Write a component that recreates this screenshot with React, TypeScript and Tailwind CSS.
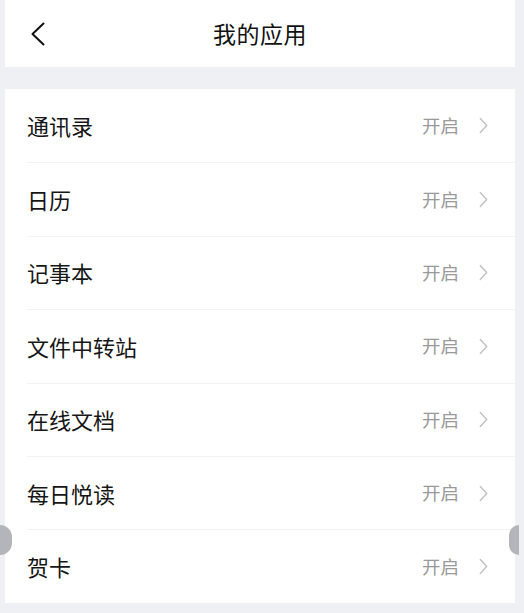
const apps = ['通讯录', '日历', '记事本', '文件中转站', '在线文档', '每日悦读', '贺卡'];

function Chevron({ className }: { className?: string }) {
  return (
    <svg viewBox="0 0 8 16" className={className} fill="none" stroke="currentColor" strokeWidth="1.4" strokeLinecap="round" strokeLinejoin="round">
      <path d="M1 1.5 L7 8 L1 14.5" />
    </svg>
  );
}

export default function App() {
  return (
    <div
      className="relative h-[613px] w-[524px] overflow-hidden bg-[#eff0f3] pl-[5px] pr-[9px]"
      style={{ fontFamily: '"Noto Sans CJK SC", "Noto Sans", sans-serif' }}
    >
      <header className="relative flex h-[67px] items-center justify-center bg-white">
        <button className="absolute left-[26px] top-[22px] text-[#111]">
          <svg viewBox="0 0 14 24" className="h-[24px] w-[14px]" fill="none" stroke="currentColor" strokeWidth="2" strokeLinecap="round" strokeLinejoin="round">
            <path d="M12.5 1.5 L1.5 12 L12.5 22.5" />
          </svg>
        </button>
        <h1 className="text-[23px] font-normal tracking-[0.5px] text-[#111]">我的应用</h1>
      </header>

      <div className="h-[22px]" />

      <ul className="bg-white">
        {apps.map((name, i) => (
          <li key={name} className="flex h-[73.4px] items-center pl-[22px]">
            <div
              className={`flex h-full flex-1 items-center pr-[27px] ${i > 0 ? 'border-t border-[#f3f3f3]' : ''}`}
            >
              <span className="flex-1 text-[22px] text-[#161616]">{name}</span>
              <span className="text-[18.5px] text-[#9a9a9a]">开启</span>
              <Chevron className="ml-[20px] h-[17px] w-[9px] text-[#c2c2c2]" />
            </div>
          </li>
        ))}
      </ul>

      <div className="absolute left-0 top-[525px] h-[30px] w-[12px] rounded-r-full bg-[#b4b5bb]" />
      <div className="absolute right-[5px] top-[525px] h-[30px] w-[10px] rounded-l-full bg-[#b4b5bb]" />
    </div>
  );
}
